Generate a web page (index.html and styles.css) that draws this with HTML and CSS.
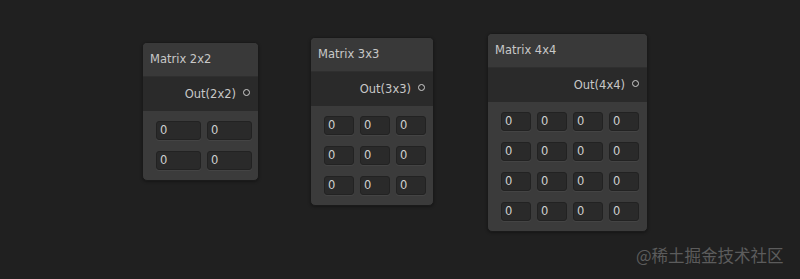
FILE: index.html
```html
<!DOCTYPE html>
<html lang="en">
<head>
    <meta charset="UTF-8">
    <title>Matrix Nodes</title>
    <link rel="stylesheet" href="styles.css">
</head>
<body>
    <div class="graph">
        <div class="node node-2">
            <div class="node-title">Matrix 2x2</div>
            <div class="node-output">Out(2x2) <span class="port"></span></div>
            <div class="node-body cols-2">
                <div class="field">0</div><div class="field">0</div>
                <div class="field">0</div><div class="field">0</div>
            </div>
        </div>

        <div class="node node-3">
            <div class="node-title">Matrix 3x3</div>
            <div class="node-output">Out(3x3) <span class="port"></span></div>
            <div class="node-body cols-3">
                <div class="field">0</div><div class="field">0</div><div class="field">0</div>
                <div class="field">0</div><div class="field">0</div><div class="field">0</div>
                <div class="field">0</div><div class="field">0</div><div class="field">0</div>
            </div>
        </div>

        <div class="node node-4">
            <div class="node-title">Matrix 4x4</div>
            <div class="node-output">Out(4x4) <span class="port"></span></div>
            <div class="node-body cols-4">
                <div class="field">0</div><div class="field">0</div><div class="field">0</div><div class="field">0</div>
                <div class="field">0</div><div class="field">0</div><div class="field">0</div><div class="field">0</div>
                <div class="field">0</div><div class="field">0</div><div class="field">0</div><div class="field">0</div>
                <div class="field">0</div><div class="field">0</div><div class="field">0</div><div class="field">0</div>
            </div>
        </div>

        <div class="watermark">@稀土掘金技术社区</div>
    </div>
</body>
</html>
```

FILE: styles.css
```css
body {
    margin: 0;
    background-color: #202020;
    font-family: "DejaVu Sans", sans-serif;
    font-size: 11.5px;
    color: #c8c8c8;
}
.graph {
    position: relative;
    width: 800px;
    height: 279px;
    overflow: hidden;
}
.node {
    position: absolute;
    box-sizing: border-box;
    border: 1px solid #1a1a1a;
    border-radius: 5px;
    background-color: #3b3b3b;
    overflow: hidden;
    box-shadow: 0 1px 3px rgba(0, 0, 0, 0.35);
}
.node-2 {
    left: 142px;
    top: 42px;
    width: 117px;
}
.node-3 {
    left: 310px;
    top: 37px;
    width: 124px;
}
.node-4 {
    left: 487px;
    top: 33px;
    width: 161px;
}
.node-title {
    height: 33px;
    line-height: 33px;
    padding-left: 7px;
    background-color: #393939;
    border-bottom: 1px solid #2f2f2f;
}
.node-output {
    height: 34px;
    display: flex;
    align-items: center;
    justify-content: flex-end;
    gap: 7px;
    padding-right: 8px;
    background-color: #2a2a2a;
}
.port {
    width: 5px;
    height: 5px;
    border: 1px solid #cfcfcf;
    border-radius: 50%;
    background-color: #2a2a2a;
    margin-top: -3px;
}
.node-body {
    display: grid;
    row-gap: 11px;
    column-gap: 6px;
    padding: 10px 8px 10px 13px;
}
.cols-2 {
    grid-template-columns: repeat(2, 45px);
}
.cols-3 {
    grid-template-columns: repeat(3, 30px);
}
.cols-4 {
    grid-template-columns: repeat(4, 30px);
}
.field {
    box-sizing: border-box;
    height: 19px;
    line-height: 17px;
    padding-left: 3px;
    background-color: #2a2a2a;
    border: 1px solid #222;
    border-radius: 3px;
    color: #d0d0d0;
    box-shadow: 0 1px 0 #444;
}
.watermark {
    position: absolute;
    left: 636px;
    top: 243px;
    font-family: "Noto Sans CJK SC", sans-serif;
    font-size: 16.5px;
    color: #5c5c5c;
}
```
